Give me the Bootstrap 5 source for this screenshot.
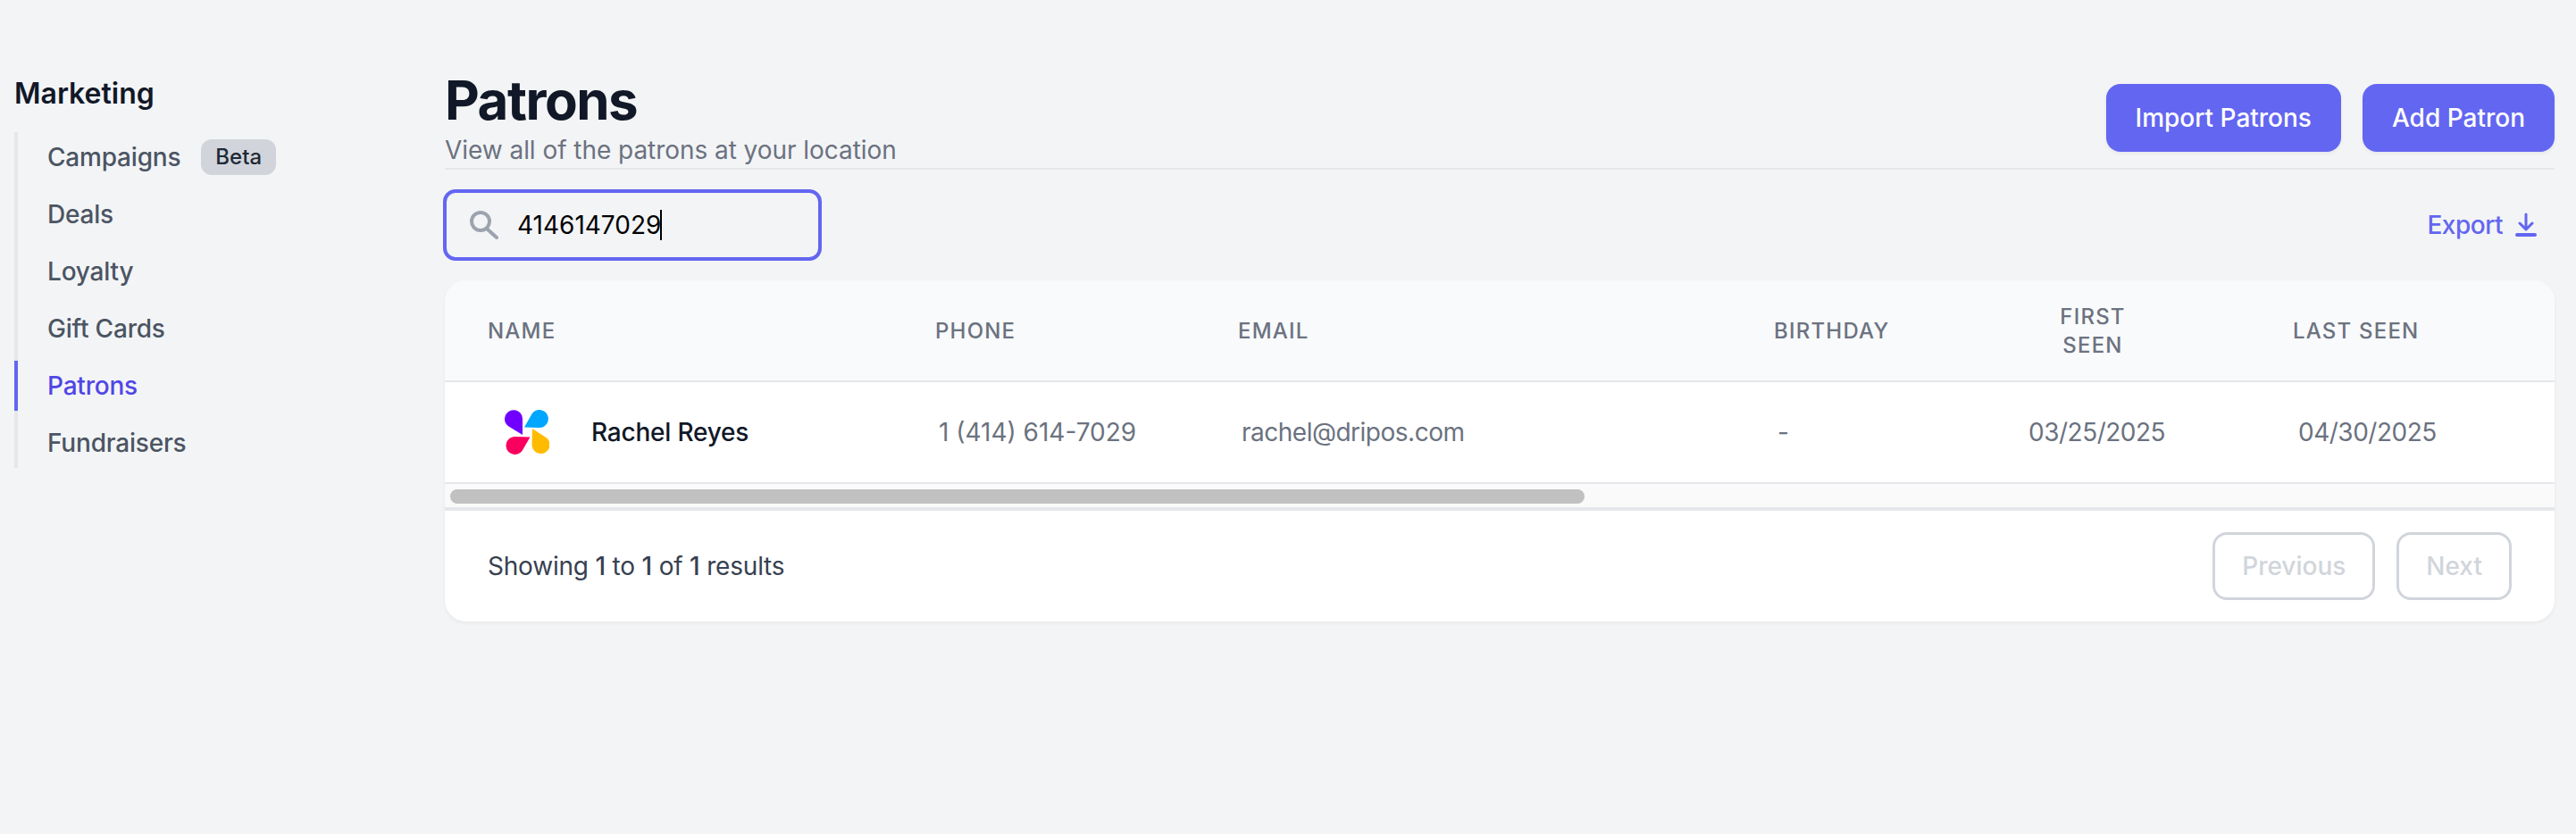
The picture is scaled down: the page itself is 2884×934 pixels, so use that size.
<!DOCTYPE html>
<html lang="en">

<head>
    <meta charset="UTF-8">
    <meta name="viewport" content="width=device-width, initial-scale=1.0">
    <title>Patrons</title>
    <link rel="stylesheet" href="https://cdn.jsdelivr.net/npm/bootstrap@5.3.0/dist/css/bootstrap.min.css">
    <style>
        body { background: #f3f4f6; font-family: Inter, "Liberation Sans", sans-serif; font-size: 28px; min-height: 934px; color: #111827; }
        .side-col { width: 498px; flex: none; padding: 85px 0 0 16px; }
        .main-col { width: 2362px; flex: none; padding-top: 76px; }
        .side-title { font-size: 32px; line-height: 40px; font-weight: 600; color: #111827; margin: 0 0 23px 0; }
        .side-nav { border-left: 4px solid #e5e7eb; gap: 8px; }
        .side-link { height: 56px; margin-left: -4px; padding-left: 33px; border-left: 4px solid transparent; color: #4b5563; font-weight: 500; font-size: 28px; letter-spacing: -.2px; text-decoration: none; }
        .side-link.current { border-left-color: #6366f1; color: #4f46e5; }
        .beta-tag { background: #d1d5db; color: #1f2937; font-size: 24px; line-height: 40px; height: 40px; padding: 0 16px; border-radius: 12px; font-weight: 500; margin-left: 23px; letter-spacing: 0; }
        .page-head { border-bottom: 2px solid #e5e7eb; height: 114px; }
        .page-title { font-size: 60px; line-height: 72px; font-weight: 700; letter-spacing: -.025em; color: #111827; margin: 0; }
        .page-sub { font-size: 28px; line-height: 40px; color: #6b7280; margin: 0; letter-spacing: -.05px; }
        .btn-brand { background: #6366f1; border: 0; color: #fff; font-size: 28px; font-weight: 500; height: 76px; padding: 0 33px; border-radius: 16px; box-shadow: 0 2px 4px rgba(0, 0, 0, .06); }
        .btn-brand:hover { background: #4f46e5; color: #fff; }
        .tool-row { margin-top: 22px; height: 80px; margin-bottom: 22px; }
        .search-box { width: 424px; height: 80px; border: 4px solid #6366f1; border-radius: 14px; padding-left: 26px; margin-left: -2px; }
        .search-input { width: 160px; margin-left: 21px; padding: 0; border: 0; outline: 0; background: transparent; color: #000; font-size: 28px; }
        .caret-bar { width: 2px; height: 34px; background: #000; }
        .export-link { color: #6366f1; font-weight: 500; font-size: 28px; letter-spacing: -.5px; text-decoration: none; margin-right: 20px; gap: 14px; }
        .patron-card { border: 0; border-radius: 24px; overflow: hidden; box-shadow: 0 2px 4px rgba(0, 0, 0, .05); background: #fff; }
        .patron-table { table-layout: fixed; width: 2362px; margin: 0; }
        .patron-table th { background: #f9fafb; height: 113px; padding: 2px 0 0 48px; vertical-align: middle; font-size: 24px; line-height: 32px; font-weight: 500; letter-spacing: .05em; text-transform: uppercase; color: #6b7280; border-bottom: 2px solid #e5e7eb; }
        .patron-table td { height: 114px; padding: 0 0 0 52px; vertical-align: middle; font-size: 28px; color: #6b7280; border-bottom: 2px solid #e5e7eb; }
        .patron-table th.seen-head { padding-left: 44px; }
        .seen-wrap { width: 144px; text-align: center; }
        .patron-name { color: #111827; font-weight: 500; gap: 47px; letter-spacing: -.2px; }
        .patron-table td.name-cell { padding-left: 67px; }
        .patron-table td.mail-cell { letter-spacing: -.5px; }
        .patron-table td.date-cell { letter-spacing: -.5px; }
        .patron-table td.first-cell { padding-left: 44px; }
        .patron-table td.last-cell { padding-left: 54px; }
        .scroll-track { height: 30px; background: #fafafa; border-bottom: 4px solid #e5e7eb; padding: 6px 0 0 6px; }
        .scroll-thumb { width: 1270px; height: 16px; background: #c1c1c1; border-radius: 8px; }
        .card-foot { height: 124px; padding: 0 48px; }
        .foot-text { color: #374151; letter-spacing: -.2px; }
        .foot-text b { font-weight: 500; }
        .btn-page { height: 76px; padding: 0 30px; border: 3px solid #d1d5db; border-radius: 16px; background: #fff; color: #d1d5db; font-size: 28px; font-weight: 500; }
        .btn-page:disabled { border-color: #d1d5db; color: #d1d5db; background: #fff; opacity: 1; }
    </style>
</head>

<body>
    <div class="d-flex">
        <div class="side-col">
            <h2 class="side-title">Marketing</h2>
            <nav class="side-nav d-flex flex-column">
                <a class="side-link d-flex align-items-center" href="#">Campaigns <span class="beta-tag">Beta</span></a>
                <a class="side-link d-flex align-items-center" href="#">Deals</a>
                <a class="side-link d-flex align-items-center" href="#">Loyalty</a>
                <a class="side-link d-flex align-items-center" href="#">Gift Cards</a>
                <a class="side-link current d-flex align-items-center" href="#">Patrons</a>
                <a class="side-link d-flex align-items-center" href="#">Fundraisers</a>
            </nav>
        </div>

        <div class="main-col">
            <div class="page-head d-flex justify-content-between align-items-center">
                <div>
                    <h1 class="page-title">Patrons</h1>
                    <p class="page-sub">View all of the patrons at your location</p>
                </div>
                <div class="d-flex gap-4">
                    <button class="btn btn-brand">Import Patrons</button>
                    <button class="btn btn-brand">Add Patron</button>
                </div>
            </div>

            <div class="tool-row d-flex justify-content-between align-items-center">
                <div class="search-box d-flex align-items-center">
                    <svg width="32" height="32" viewBox="0 0 32 32" fill="none" stroke="#9ca3af" stroke-width="4" stroke-linecap="round">
                        <circle cx="12" cy="12" r="10"></circle>
                        <line x1="20" y1="21" x2="30" y2="30"></line>
                    </svg>
                    <input class="search-input" type="text" value="4146147029">
                    <span class="caret-bar"></span>
                </div>
                <a class="export-link d-flex align-items-center" href="#">Export
                    <svg width="24" height="28" viewBox="0 0 24 28" fill="none" stroke="#6366f1" stroke-width="3" stroke-linecap="round" stroke-linejoin="round">
                        <path d="M12 2V19M5 12l7 7 7-7"></path>
                        <path d="M2 25H22" stroke-width="4"></path>
                    </svg>
                </a>
            </div>

            <div class="card patron-card">
                <table class="table patron-table">
                    <colgroup>
                        <col style="width: 501px">
                        <col style="width: 339px">
                        <col style="width: 600px">
                        <col style="width: 289px">
                        <col style="width: 292px">
                        <col style="width: 341px">
                    </colgroup>
                    <thead>
                        <tr>
                            <th>Name</th>
                            <th>Phone</th>
                            <th>Email</th>
                            <th>Birthday</th>
                            <th class="seen-head"><div class="seen-wrap">First Seen</div></th>
                            <th>Last Seen</th>
                        </tr>
                    </thead>
                    <tbody>
                        <tr>
                            <td class="name-cell">
                                <div class="patron-name d-flex align-items-center">
                                    <svg width="50" height="50" viewBox="25 19 50 50">
                                        <path fill="#7000ff" d="M45 47L45 29A10 10 0 1 0 29.5 37.5Z"></path>
                                        <path fill="#00a6ff" d="M47 38.5L64 39A10 10 0 1 0 55.5 23.5Z"></path>
                                        <path fill="#f9005f" d="M53.5 49.5L36 49A10 10 0 1 0 44.5 65Z"></path>
                                        <path fill="#ffbb00" d="M56 40L55.5 58A10 10 0 1 0 72 50.5Z"></path>
                                    </svg>
                                    <span>Rachel Reyes</span>
                                </div>
                            </td>
                            <td>1 (414) 614-7029</td>
                            <td class="mail-cell">rachel@dripos.com</td>
                            <td>-</td>
                            <td class="date-cell first-cell">03/25/2025</td>
                            <td class="date-cell last-cell">04/30/2025</td>
                        </tr>
                    </tbody>
                </table>
                <div class="scroll-track"><div class="scroll-thumb"></div></div>
                <div class="card-foot d-flex justify-content-between align-items-center">
                    <div class="foot-text">Showing <b>1</b> to <b>1</b> of <b>1</b> results</div>
                    <div class="d-flex gap-4">
                        <button class="btn btn-page" disabled>Previous</button>
                        <button class="btn btn-page" disabled>Next</button>
                    </div>
                </div>
            </div>
        </div>
    </div>

    <script src="https://cdn.jsdelivr.net/npm/bootstrap@5.3.0/dist/js/bootstrap.bundle.min.js"></script>
</body>

</html>
